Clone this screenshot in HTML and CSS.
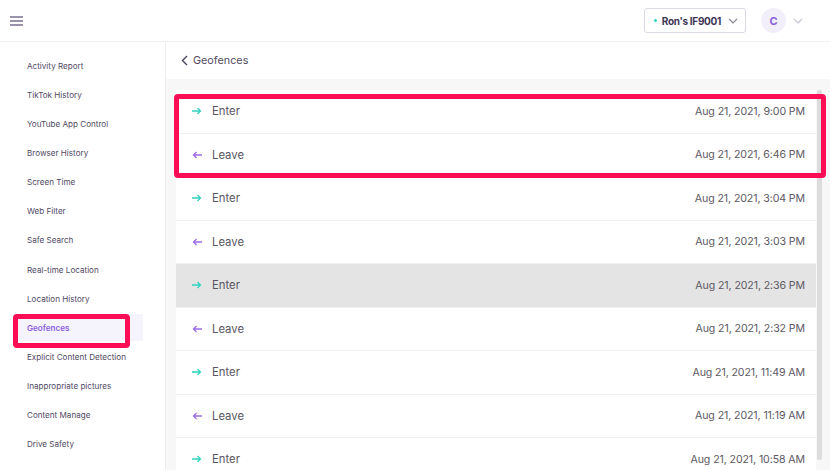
FILE: index.html
```html
<!DOCTYPE html>
<html>
<head>
<meta charset="utf-8">
<link rel="stylesheet" href="styles.css">
</head>
<body>
<div class="app">
  <header class="topbar">
    <svg class="burger" width="13" height="10" viewBox="0 0 13 10"><path d="M0 1h13M0 5h13M0 9h13" stroke="#7b7090" stroke-width="1.6"/></svg>
    <div class="top-right">
      <div class="device">
        <span class="dot"></span>
        <span class="device-name">Ron's IF9001</span>
        <svg width="10" height="6" viewBox="0 0 10 6"><path d="M1 1l4 4 4-4" fill="none" stroke="#8a8496" stroke-width="1.2"/></svg>
      </div>
      <div class="avatar">C</div>
      <svg class="avatar-caret" width="10" height="6" viewBox="0 0 10 6"><path d="M1 1l4 4 4-4" fill="none" stroke="#c9c4d3" stroke-width="1.2"/></svg>
    </div>
  </header>
  <div class="body">
    <nav class="sidebar">
      <a class="nav-item">Activity Report</a>
      <a class="nav-item">TikTok History</a>
      <a class="nav-item">YouTube App Control</a>
      <a class="nav-item">Browser History</a>
      <a class="nav-item">Screen Time</a>
      <a class="nav-item">Web Filter</a>
      <a class="nav-item">Safe Search</a>
      <a class="nav-item">Real-time Location</a>
      <a class="nav-item">Location History</a>
      <a class="nav-item active">Geofences</a>
      <a class="nav-item">Explicit Content Detection</a>
      <a class="nav-item">Inappropriate pictures</a>
      <a class="nav-item">Content Manage</a>
      <a class="nav-item">Drive Safety</a>
    </nav>
    <main class="main">
      <div class="page-title">
        <svg width="7" height="11" viewBox="0 0 7 11"><path d="M6 1L1.5 5.5 6 10" fill="none" stroke="#4a4262" stroke-width="1.4"/></svg>
        <span>Geofences</span>
      </div>
      <div class="content">
        <div class="list">
          <div class="row"><span class="ic enter"><svg width="10" height="8" viewBox="0 0 10 8"><path d="M0 4h8.5M5.5 1l3 3-3 3" fill="none" stroke="currentColor" stroke-width="1.3"/></svg></span><span class="label">Enter</span><span class="time">Aug 21, 2021, 9:00 PM</span></div>
          <div class="row"><span class="ic leave"><svg width="10" height="8" viewBox="0 0 10 8"><path d="M10 4H1.5M4.5 1l-3 3 3 3" fill="none" stroke="currentColor" stroke-width="1.3"/></svg></span><span class="label">Leave</span><span class="time">Aug 21, 2021, 6:46 PM</span></div>
          <div class="row"><span class="ic enter"><svg width="10" height="8" viewBox="0 0 10 8"><path d="M0 4h8.5M5.5 1l3 3-3 3" fill="none" stroke="currentColor" stroke-width="1.3"/></svg></span><span class="label">Enter</span><span class="time">Aug 21, 2021, 3:04 PM</span></div>
          <div class="row"><span class="ic leave"><svg width="10" height="8" viewBox="0 0 10 8"><path d="M10 4H1.5M4.5 1l-3 3 3 3" fill="none" stroke="currentColor" stroke-width="1.3"/></svg></span><span class="label">Leave</span><span class="time">Aug 21, 2021, 3:03 PM</span></div>
          <div class="row hover"><span class="ic enter"><svg width="10" height="8" viewBox="0 0 10 8"><path d="M0 4h8.5M5.5 1l3 3-3 3" fill="none" stroke="currentColor" stroke-width="1.3"/></svg></span><span class="label">Enter</span><span class="time">Aug 21, 2021, 2:36 PM</span></div>
          <div class="row"><span class="ic leave"><svg width="10" height="8" viewBox="0 0 10 8"><path d="M10 4H1.5M4.5 1l-3 3 3 3" fill="none" stroke="currentColor" stroke-width="1.3"/></svg></span><span class="label">Leave</span><span class="time">Aug 21, 2021, 2:32 PM</span></div>
          <div class="row"><span class="ic enter"><svg width="10" height="8" viewBox="0 0 10 8"><path d="M0 4h8.5M5.5 1l3 3-3 3" fill="none" stroke="currentColor" stroke-width="1.3"/></svg></span><span class="label">Enter</span><span class="time">Aug 21, 2021, 11:49 AM</span></div>
          <div class="row"><span class="ic leave"><svg width="10" height="8" viewBox="0 0 10 8"><path d="M10 4H1.5M4.5 1l-3 3 3 3" fill="none" stroke="currentColor" stroke-width="1.3"/></svg></span><span class="label">Leave</span><span class="time">Aug 21, 2021, 11:19 AM</span></div>
          <div class="row"><span class="ic enter"><svg width="10" height="8" viewBox="0 0 10 8"><path d="M0 4h8.5M5.5 1l3 3-3 3" fill="none" stroke="currentColor" stroke-width="1.3"/></svg></span><span class="label">Enter</span><span class="time">Aug 21, 2021, 10:58 AM</span></div>
        </div>
        <div class="scrollbar"></div>
      </div>
    </main>
  </div>
  <div class="mark mark-list"></div>
  <div class="mark mark-nav"></div>
</div>
</body>
</html>
```
FILE: styles.css
```css
* { box-sizing: border-box; }
html, body { margin: 0; padding: 0; }
body {
  width: 830px;
  height: 470px;
  overflow: hidden;
  font-family: Inter, "Noto Sans", sans-serif;
  background: #fff;
}
.app { position: relative; width: 830px; height: 470px; display: flex; flex-direction: column; }
.topbar {
  height: 42px;
  border-bottom: 1px solid #efeff2;
  display: flex;
  align-items: center;
  justify-content: space-between;
  padding: 0 0 0 10px;
  flex: none;
}
.burger { display: block; }
.top-right { display: flex; align-items: center; padding-right: 27px; }
.device {
  height: 25px;
  border: 1px solid #dcdae2;
  border-radius: 3px;
  display: flex;
  align-items: center;
  padding: 0 7px 0 9px;
  margin-right: 15px;
}
.dot { width: 3px; height: 3px; border-radius: 50%; background: #2fd3bf; margin-right: 5px; flex: none; }
.device-name { font-size: 10px; font-weight: 700; color: #3f3656; letter-spacing: -0.3px; white-space: nowrap; margin-right: 7px; }
.device svg { display: block; flex: none; }
.avatar {
  width: 25px; height: 25px; border-radius: 50%;
  background: #f2effa;
  color: #8a5fdc;
  font-weight: 700; font-size: 11px;
  display: flex; align-items: center; justify-content: center;
  margin-right: 7px;
}
.avatar-caret { display: block; }
.body { flex: 1; display: flex; min-height: 0; }
.sidebar {
  width: 166px;
  flex: none;
  border-right: 1px solid #eeeef1;
  padding: 9px 22px 0 13px;
  display: flex;
  flex-direction: column;
}
.nav-item {
  display: flex;
  align-items: center;
  height: 29.15px;
  padding-left: 14px;
  font-size: 8.1px;
  color: #514a65;
  white-space: nowrap;
}
.nav-item.active { background: #f5f3fb; color: #8b62e0; font-weight: 600; height: 27px; margin: 1px 0; }
.main { flex: 1; display: flex; flex-direction: column; min-width: 0; background: #f7f7f8; }
.page-title {
  height: 37px;
  background: #fff;
  display: flex;
  align-items: center;
  padding-left: 15px;
  gap: 5px;
  font-size: 10.8px;
  color: #544d63;
  flex: none;
}
.content { flex: 1; display: flex; padding: 11px 8px 0 10px; min-height: 0; }
.list { flex: 1; background: #fff; }
.row {
  height: 43.5px;
  display: flex;
  align-items: center;
  padding: 0 11px 0 16px;
  border-bottom: 1px solid #f1f1f3;
  font-size: 11px;
  color: #57525e;
}
.row.hover { background: #e4e4e4; }
.ic { width: 10px; display: flex; margin-right: 10px; }
.ic svg { display: block; }
.enter { color: #31d3bf; }
.leave { color: #9b6ce8; }
.label { flex: 1; font-size: 11.3px; color: #585460; }
.time { font-size: 10.6px; color: #5c5862; letter-spacing: -0.1px; }
.scrollbar { width: 5px; margin: 0 0 0 1px; background: #dcdcdc; border-radius: 2px; height: 370px; }
.mark {
  position: absolute;
  border: 5px solid #fe0d57;
  border-radius: 4px;
}
.mark-list { left: 174px; top: 94px; width: 652px; height: 84px; }
.mark-nav { left: 13px; top: 314px; width: 117px; height: 34px; }
```
